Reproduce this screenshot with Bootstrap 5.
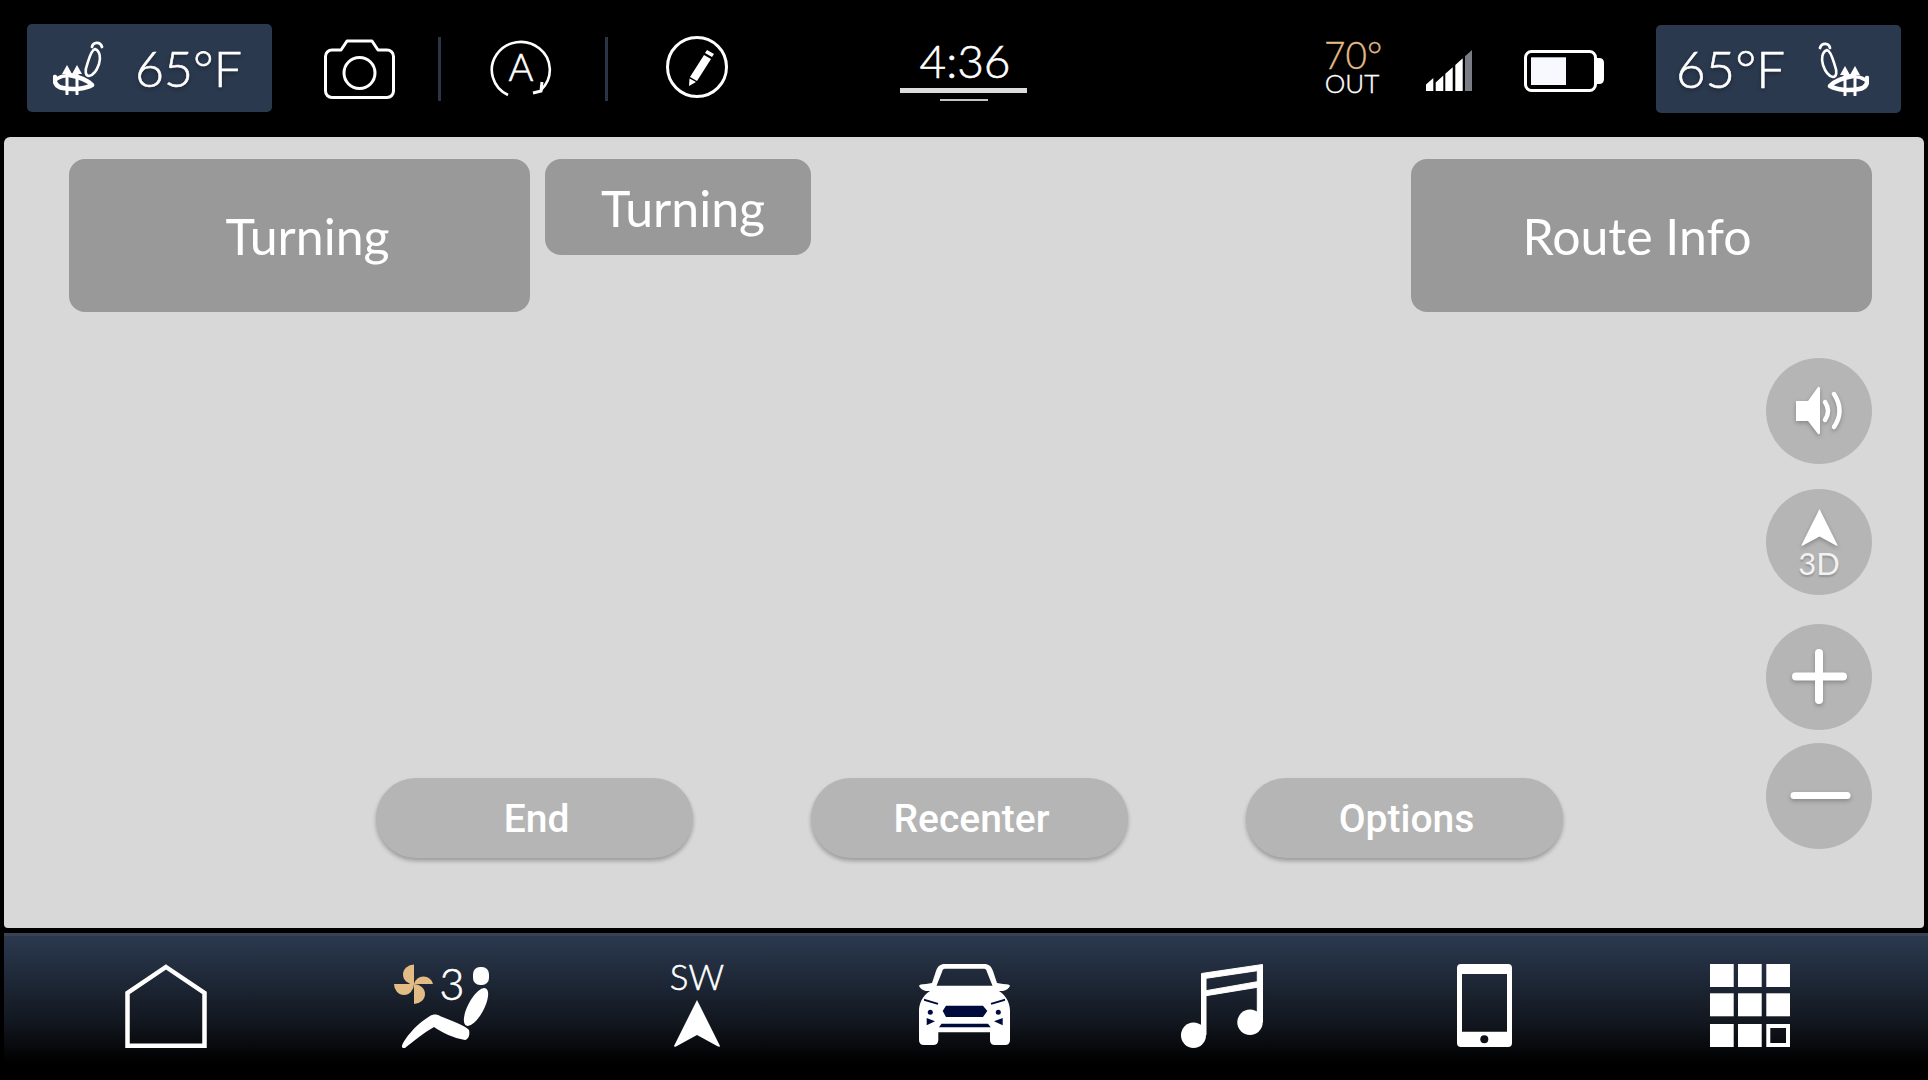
<!DOCTYPE html>
<html lang="en">
<head>
  <meta charset="UTF-8">
  <title>Navigation</title>
  <meta name="viewport" content="width=device-width, initial-scale=1">
  <link href="https://cdn.jsdelivr.net/npm/bootstrap@5.3.3/dist/css/bootstrap.min.css" rel="stylesheet">
  <style>
    html, body { background: #000; }
    body { font-family: "Lato", "Liberation Sans", sans-serif; color: #fff; overflow: hidden; }
    svg { display: block; flex: none; }
    svg text { font-family: "Lato", "Liberation Sans", sans-serif; }

    /* top status bar */
    .status-bar { height: 137px; padding-left: 27px; }
    .status-bar > * { flex: none; }
    .seat-pill { width: 245px; height: 88px; background: #2b394f; border-radius: 5px; font-size: 50px; font-weight: 300; -webkit-text-stroke: .6px #fff; text-shadow: 0 2px 4px rgba(0,0,0,.45); }
    .seat-pill.left-seat { padding-left: 26px; gap: 30px; margin-top: -1px; }
    .seat-pill.right-seat { padding-left: 20px; gap: 32px; margin-left: 52px; margin-top: 1px; font-size: 51px; }
    .m-camera { margin-left: 52px; }
    .status-rule { width: 3px; height: 64px; background: #2b3445; }
    .m-rule1 { margin-left: 43px; }
    .m-auto-a { margin-left: 48px; margin-top: -4px; }
    .m-rule2 { margin-left: 52px; }
    .m-pen { margin-left: 58px; margin-top: -3px; }
    .clock { width: 127px; margin-left: 172px; }
    .clock-time { font-size: 46px; line-height: 50px; font-weight: 300; -webkit-text-stroke: .6px #fff; text-align: center; padding-left: 3px; }
    .clock-line { height: 5px; background: #dcdcdc; margin-top: 2px; }
    .clock-sub { width: 48px; height: 2px; background: #c4c4c4; margin: 6px auto 0; }
    .outside { margin-left: 297px; margin-top: -4px; width: 56px; text-align: center; }
    .outside-temp { font-size: 37px; line-height: 33px; color: #e3bc85; font-weight: 300; -webkit-text-stroke: .3px #e3bc85; }
    .outside-label { font-size: 26px; line-height: 24px; font-weight: 300; -webkit-text-stroke: .4px #fff; }
    .m-signal { margin-left: 46px; margin-top: 4px; }
    .m-battery { margin-left: 52px; margin-top: 4px; }

    /* map area */
    .map-panel { width: 1920px; height: 791px; margin-left: 4px; background: #d8d8d8; border-radius: 6px 6px 4px 4px; padding: 22px 52px 0 65px; }
    .turn-card { background: #999; border: 0; border-radius: 16px; color: #fff; font-size: 50px; line-height: 1; display: flex; align-items: center; justify-content: center; padding: 0; }
    .turn-big { width: 461px; height: 153px; padding-left: 16px; }
    .turn-small { width: 266px; height: 96px; margin-left: 15px; padding-left: 10px; padding-top: 2px; }
    .turn-route { width: 461px; height: 153px; margin-left: auto; padding-right: 9px; }
    .map-body { min-height: 0; }
    .map-actions { padding: 0 0 70px 307px; gap: 118px; }
    .action-pill { width: 317px; height: 80px; padding: 2px 12px 0 16px; background: #b5b5b5; border: 0; border-radius: 40px; color: #fff; font-family: "Roboto", "Liberation Sans", sans-serif; font-weight: 500; font-size: 39px; line-height: 1; box-shadow: 0 3px 4px rgba(0,0,0,.28); }
    .map-tools { width: 106px; padding-top: 46px; }
    .tool-round { width: 106px; height: 106px; background: #b5b5b5; border: 0; border-radius: 50%; padding: 0; color: #fff; }
    .tool-round svg { filter: drop-shadow(0 2px 2px rgba(0,0,0,.25)); }
    .tool-3d { margin-top: 25px; padding-top: 2px; }
    .tool-plus { margin-top: 29px; }
    .tool-minus { margin-top: 13px; }
    .tool-3d-label { font-size: 31px; line-height: 30px; margin-top: 2px; color: #f2f2f2; text-shadow: 0 2px 2px rgba(0,0,0,.2); }

    /* bottom dock */
    .dock-rule { height: 3px; margin: 5px 0 0 4px; background: #3b4352; }
    .dock { height: 144px; margin-left: 4px; display: grid; grid-template-columns: 324px 227px 284px 251px 264px 261px 270px; padding-top: 28px; background: linear-gradient(to bottom, #2b3950 0%, #12171f 60%, #000 88%); }
    .dock-cell { display: flex; flex-direction: column; align-items: center; }
    .dock-sw { font-size: 35px; line-height: 27px; font-weight: 300; -webkit-text-stroke: .5px #fff; margin-top: -1px; margin-bottom: 10px; }
    .dock-fan { margin-top: -8px; }
  </style>
</head>
<body>

<svg width="0" height="0" class="position-absolute">
  <defs>
    <symbol id="seat-heat" viewBox="0 0 52 54">
      <g fill="none" stroke="#fff" stroke-linecap="round" stroke-linejoin="round">
        <path stroke-width="2.6" d="M42 8 C47 10 48 17 46 23 C44 29 41 34 36 35 C32 35 32 29 34 24 C36 18 38 9 42 8 Z"/>
        <path stroke-width="2.8" d="M39 6 C40 1 47 0 49 6"/>
        <path stroke-width="4.5" d="M2 36 C1 41 3 46 10 47 C20 49 32 48 39 44 C35 39 26 36 16 34"/>
        <path stroke-width="3.5" d="M1 40 C6 36 9 35 12 35"/>
        <path stroke-width="3" d="M14 33 V53 M24 33 V53"/>
      </g>
      <path fill="#fff" d="M14 24 L19 33 H9 Z M24 24 L29 33 H19 Z"/>
    </symbol>
    <symbol id="nav-arrow" viewBox="0 0 46 47">
      <path fill="#fff" d="M23 0 L46 46 Q46 47 44 46.5 L23 35 L2 46.5 Q0 47 0 46 Z"/>
    </symbol>
  </defs>
</svg>

<!-- Status bar -->
<div class="status-bar d-flex align-items-center">
  <div class="seat-pill left-seat d-flex align-items-center">
    <svg width="52" height="54"><use href="#seat-heat"/></svg>
    <span>65°F</span>
  </div>
  <svg class="m-camera" width="71" height="60" viewBox="0 0 71 60" fill="none" stroke="#fff" stroke-width="3">
    <path stroke-linejoin="round" d="M8 11 H17 L23 2 H48 L54 11 H63 A6.5 6.5 0 0 1 69.5 17.5 V52 A6.5 6.5 0 0 1 63 58.5 H8 A6.5 6.5 0 0 1 1.5 52 V17.5 A6.5 6.5 0 0 1 8 11 Z"/>
    <circle cx="35.5" cy="34" r="15.5"/>
  </svg>
  <div class="status-rule m-rule1"></div>
  <svg class="m-auto-a" width="64" height="60" viewBox="0 0 64 60" fill="none" stroke="#fff" stroke-width="2.6">
    <path d="M19 58 A29 28 0 1 1 52 53"/>
    <path stroke-width="3" d="M44 56 L52 54 L53 45"/>
    <text x="32" y="44" fill="#fff" stroke="#fff" stroke-width=".6" font-size="38" font-weight="300" text-anchor="middle">A</text>
  </svg>
  <div class="status-rule m-rule2"></div>
  <svg class="m-pen" width="62" height="62" viewBox="0 0 62 62" fill="none" stroke="#fff" stroke-width="3">
    <circle cx="31" cy="31" r="29.5"/>
    <path fill="#fff" stroke="none" d="M38 19 L45 23 L31 45 L24 41 Z M23.5 42.5 L30 46 L23 50 Z M39 17 L41 14 L48 18 L46 21 Z"/>
  </svg>
  <div class="clock">
    <div class="clock-time">4:36</div>
    <div class="clock-line"></div>
    <div class="clock-sub"></div>
  </div>
  <div class="outside">
    <div class="outside-temp">70°</div>
    <div class="outside-label">OUT</div>
  </div>
  <svg class="m-signal" width="46" height="41" viewBox="0 0 46 41">
    <path fill="#fff" d="M0 41 V34.5 L7.3 28 V41 Z M9.7 41 V32.4 L17.3 25.6 V41 Z M19.3 41 V23.8 L26.7 17.2 V41 Z M29.3 41 V14.9 L36.7 8.3 V41 Z"/>
    <path fill="#7a7d85" d="M39 41 V6.2 L46 0 V41 Z"/>
  </svg>
  <svg class="m-battery" width="80" height="42" viewBox="0 0 80 42">
    <rect x="1.5" y="1.5" width="70" height="39" rx="6" fill="none" stroke="#fff" stroke-width="3"/>
    <rect x="7" y="7.3" width="35" height="27.7" fill="#f8f9ff"/>
    <path fill="#fff" d="M73 8 H75 Q80 8 80 13 V29 Q80 34 75 34 H73 Z"/>
  </svg>
  <div class="seat-pill right-seat d-flex align-items-center">
    <span>65°F</span>
    <svg width="52" height="54" style="transform: scaleX(-1)"><use href="#seat-heat"/></svg>
  </div>
</div>

<!-- Map -->
<div class="map-panel d-flex flex-column">
  <div class="d-flex align-items-start">
    <button type="button" class="btn turn-card turn-big">Turning</button>
    <button type="button" class="btn turn-card turn-small">Turning</button>
    <button type="button" class="btn turn-card turn-route">Route Info</button>
  </div>
  <div class="map-body d-flex flex-grow-1">
    <div class="map-actions d-flex flex-grow-1 align-items-end">
      <button type="button" class="btn action-pill">End</button>
      <button type="button" class="btn action-pill">Recenter</button>
      <button type="button" class="btn action-pill">Options</button>
    </div>
    <div class="map-tools d-flex flex-column">
      <button type="button" class="btn tool-round d-flex align-items-center justify-content-center">
        <svg width="106" height="106" viewBox="0 0 106 106">
          <path fill="#fff" d="M30 43 H42 L52 29 Q54 28 54 31 V74 Q54 77 52 76 L42 63 H30 Z"/>
          <path fill="none" stroke="#fff" stroke-width="4.5" stroke-linecap="round" d="M59 44 Q65 53 59 62 M68 36 Q79 53 68 69"/>
        </svg>
      </button>
      <button type="button" class="btn tool-round tool-3d d-flex flex-column align-items-center justify-content-center">
        <svg width="37" height="37"><use href="#nav-arrow"/></svg>
        <span class="tool-3d-label">3D</span>
      </button>
      <button type="button" class="btn tool-round tool-plus d-flex align-items-center justify-content-center">
        <svg width="106" height="106" viewBox="0 0 106 106">
          <path fill="none" stroke="#fff" stroke-width="8" stroke-linecap="round" d="M30 52.5 H77 M53 29 V76"/>
        </svg>
      </button>
      <button type="button" class="btn tool-round tool-minus d-flex align-items-center justify-content-center">
        <svg width="106" height="106" viewBox="0 0 106 106">
          <path fill="none" stroke="#fff" stroke-width="7" stroke-linecap="round" d="M28 52.5 H81"/>
        </svg>
      </button>
    </div>
  </div>
</div>

<!-- Dock -->
<div class="dock-rule"></div>
<div class="dock">
  <div class="dock-cell">
    <svg width="82" height="84" viewBox="0 0 82 84" fill="none" stroke="#fff" stroke-width="4.5">
      <path stroke-miterlimit="10" d="M41 3 L79.5 29 V81.8 H2.5 V29 Z"/>
    </svg>
  </div>
  <div class="dock-cell">
    <svg class="dock-fan" width="97" height="92" viewBox="0 -8 97 92">
      <g fill="#e3bc85">
        <path d="M21 0.5 A11 10 0 0 0 21 20.5 Z"/>
        <path d="M40 20 A10 11 0 0 0 21 20 Z"/>
        <path d="M21 40 A11 10 0 0 0 21 20 Z"/>
        <path d="M1 20 A10 11 0 0 0 21 20 Z"/>
      </g>
      <text x="59" y="36" fill="#fff" stroke="#fff" stroke-width=".6" font-size="43" font-weight="300" text-anchor="middle">3</text>
      <g fill="#fff">
        <rect x="80" y="3" width="16" height="18" rx="7"/>
        <ellipse cx="83" cy="43" rx="8" ry="21" transform="rotate(28 83 43)"/>
        <path d="M9 83 C8 80 20 62 37 52 C40 50 44 50 47 52 C58 57 72 61 76 66 C77 70 76 75 72 76 C60 74 50 69 41 63 C30 69 20 78 12 84 Q10 85 9 83 Z"/>
      </g>
    </svg>
  </div>
  <div class="dock-cell">
    <div class="dock-sw">SW</div>
    <svg width="46" height="47"><use href="#nav-arrow"/></svg>
  </div>
  <div class="dock-cell">
    <svg width="91" height="81" viewBox="0 0 91 81">
      <path fill="#fff" fill-rule="evenodd" d="M26 0 H65 C70 0 72 2 74 7 L78 19 L84 20 Q91 20 91 22 Q89 26 84 27 H80 C88 32 91 40 91 47 V76 Q91 81 86 81 H76 Q71 81 71 76 V68.3 H19.3 V76 Q19.3 81 14 81 H5 Q0 81 0 76 V47 C0 40 3 32 11 27 H7 Q2 26 0 22 Q0 20 7 20 L13 19 L17 7 C19 2 21 0 26 0 Z M26 4.7 C24 4.7 23.5 6 23 8 L17.5 21.7 H73.5 L68 8 C67.5 6 67 4.7 65 4.7 Z"/>
      <g fill="#000a3c">
        <path d="M27 41.7 H64 L68.3 47 L64 53 H27 L23.7 47 Z"/>
        <path d="M22.5 59.7 H69 L71.7 63.3 H20 Z"/>
        <path d="M5 34.7 L19.3 39 L18.7 40.7 L5 36.7 Z M86 34.7 L71.7 39 L72.3 40.7 L86 36.7 Z"/>
        <circle cx="11.3" cy="48.3" r="2.5"/>
        <circle cx="79.3" cy="48.3" r="2.5"/>
        <path d="M7.7 54 L16 57.3 L7.7 61.3 Z M83.7 54 L75 57.3 L83.7 61.3 Z"/>
      </g>
    </svg>
  </div>
  <div class="dock-cell">
    <svg width="82" height="84" viewBox="0 0 82 84">
      <g fill="#fff">
        <path fill-rule="evenodd" stroke="#fff" stroke-width="1" stroke-linejoin="round" d="M20.5 9.5 L81.5 0.5 V58 H76.3 V23.3 L25 31.7 V71 H20.5 Z M25 14.3 V26.7 L76.3 17.7 V6.7 Z"/>
        <ellipse cx="12.5" cy="71.2" rx="12.5" ry="12.8"/>
        <ellipse cx="69" cy="58.3" rx="12.7" ry="12.7"/>
      </g>
    </svg>
  </div>
  <div class="dock-cell">
    <svg width="55" height="83" viewBox="0 0 55 83">
      <path fill="#fff" fill-rule="evenodd" d="M4 0 H51 Q55 0 55 4 V79 Q55 83 51 83 H4 Q0 83 0 79 V4 Q0 0 4 0 Z M5 10 V67.7 H50 V10 Z"/>
      <circle cx="27.3" cy="75.3" r="4" fill="#0d1117"/>
    </svg>
  </div>
  <div class="dock-cell">
    <svg width="80" height="83" viewBox="0 0 80 83">
      <g fill="#fff">
        <rect x="0" y="0" width="23.7" height="23"/><rect x="28" y="0" width="23.7" height="23"/><rect x="56.3" y="0" width="23.7" height="23"/>
        <rect x="0" y="29.3" width="23.7" height="23"/><rect x="28" y="29.3" width="23.7" height="23"/><rect x="56.3" y="29.3" width="23.7" height="23"/>
        <rect x="0" y="60" width="23.7" height="23"/><rect x="28" y="60" width="23.7" height="23"/>
      </g>
      <rect x="58.3" y="62" width="19.7" height="19" fill="none" stroke="#fff" stroke-width="4"/>
    </svg>
  </div>
</div>

<script src="https://cdn.jsdelivr.net/npm/bootstrap@5.3.3/dist/js/bootstrap.bundle.min.js"></script>
</body>
</html>
